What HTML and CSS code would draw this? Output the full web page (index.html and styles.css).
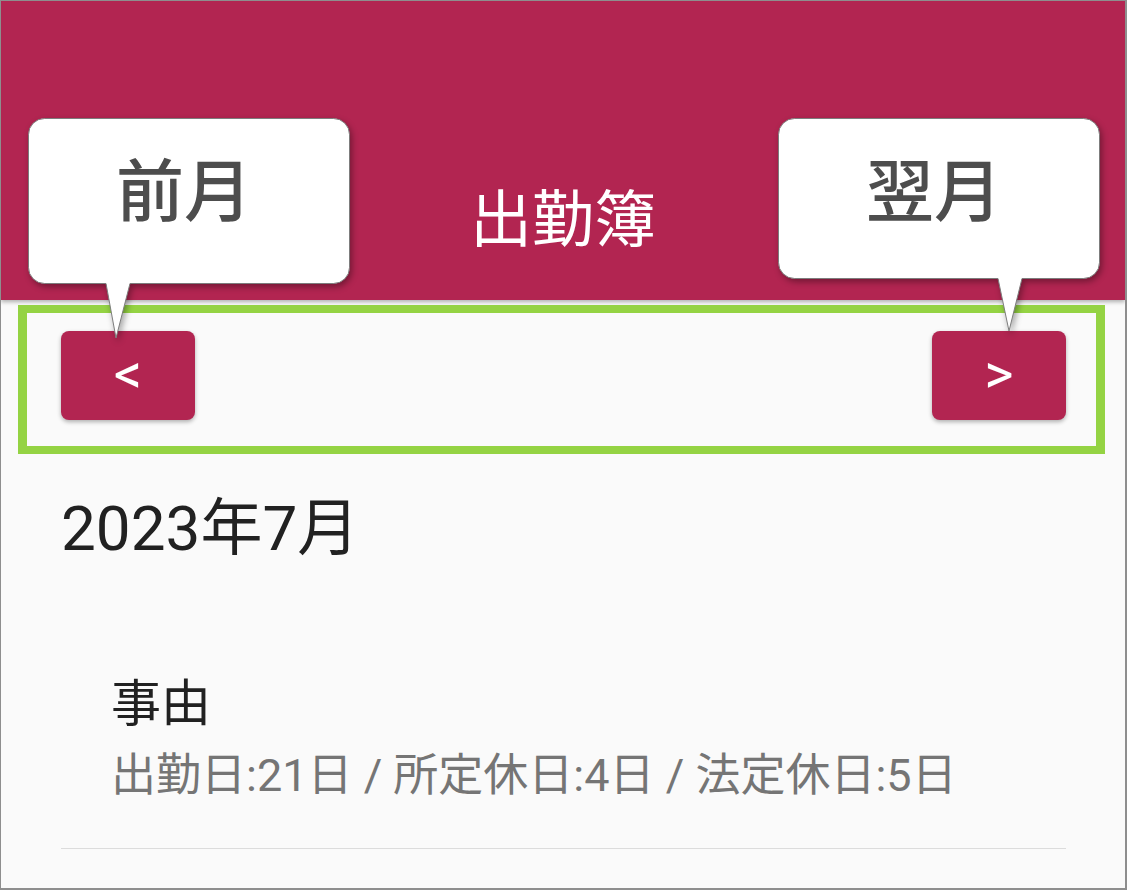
FILE: index.html
```html
<!DOCTYPE html>
<html lang="ja">
<head>
<meta charset="utf-8">
<title>出勤簿</title>
<link rel="stylesheet" href="styles.css">
</head>
<body>
<div class="screen">
  <header class="appbar">
    <h1 class="title">出勤簿</h1>
  </header>
  <div class="nav">
    <button class="nav-btn">&lt;</button>
    <button class="nav-btn">&gt;</button>
  </div>
  <h2 class="month">2023年7月</h2>
  <div class="item">
    <div class="item-title">事由</div>
    <div class="item-sub">出勤日:21日 / 所定休日:4日 / 法定休日:5日</div>
  </div>
  <div class="divider"></div>

  <div class="highlight"></div>

  <div class="callout callout-left">
    <svg class="callout-shape" width="322" height="222" viewBox="0 0 322 222">
      <path d="M16.5,0.5 H305.5 A16,16 0 0 1 321.5,16.5 V149.5 A16,16 0 0 1 305.5,165.5 H102 L88,220 L78,165.5 H16.5 A16,16 0 0 1 0.5,149.5 V16.5 A16,16 0 0 1 16.5,0.5 Z"/>
    </svg>
    <span class="callout-text">前月</span>
  </div>
  <div class="callout callout-right">
    <svg class="callout-shape" width="322" height="215" viewBox="0 0 322 215">
      <path d="M16.5,0.5 H305.5 A16,16 0 0 1 321.5,16.5 V144.5 A16,16 0 0 1 305.5,160.5 H244 L231,213 L220,160.5 H16.5 A16,16 0 0 1 0.5,144.5 V16.5 A16,16 0 0 1 16.5,0.5 Z"/>
    </svg>
    <span class="callout-text">翌月</span>
  </div>
</div>
</body>
</html>
```

FILE: styles.css
```css
* { box-sizing: border-box; }

html, body {
  margin: 0;
  padding: 0;
  background: #fafafa;
}

.screen {
  position: relative;
  width: 1127px;
  height: 890px;
  overflow: hidden;
  background: #fafafa;
  border-style: solid;
  border-color: #8e8e8e;
  border-width: 1px 2px 2px 1px;
  font-family: Roboto, "Noto Sans CJK JP", sans-serif;
}

.appbar {
  height: 299px;
  background: #b22551;
  display: flex;
  align-items: flex-end;
  justify-content: center;
  padding-bottom: 48px;
  box-shadow: 0 2px 4px rgba(0, 0, 0, 0.3);
  position: relative;
  z-index: 1;
}

.title {
  margin: 0;
  color: #ffffff;
  font-size: 62px;
  line-height: 62px;
  font-weight: 400;
}

.nav {
  display: flex;
  justify-content: space-between;
  padding: 0 59px 0 60px;
  margin-top: 31px;
}

.nav-btn {
  width: 134px;
  height: 89px;
  border: none;
  border-radius: 8px;
  background: #b22551;
  color: #ffffff;
  font-family: Roboto, sans-serif;
  font-size: 56px;
  font-weight: 400;
  line-height: 1;
  padding: 0 0 4px;
  box-shadow: 0 2px 4px rgba(0, 0, 0, 0.3);
}

.month {
  margin: 74px 0 0;
  padding-left: 60px;
  font-size: 62px;
  line-height: 70px;
  font-weight: 400;
  color: #212121;
}

.item {
  padding-left: 110px;
  margin-top: 109px;
}

.item-title {
  font-size: 50px;
  line-height: 62px;
  color: #212121;
}

.item-sub {
  margin-top: 15px;
  font-size: 45px;
  line-height: 52px;
  color: #757575;
}

.divider {
  margin: 46px 59px 0 60px;
  height: 1px;
  background: #dcdcdc;
}

.highlight {
  position: absolute;
  left: 17px;
  top: 304px;
  width: 1087px;
  height: 149px;
  border: solid #94d343;
  border-width: 8px 9px;
  z-index: 2;
}

.callout {
  position: absolute;
  top: 117px;
  width: 322px;
  z-index: 3;
}

.callout-left { left: 27px; height: 222px; }
.callout-right { left: 777px; height: 215px; }

.callout-shape {
  position: absolute;
  left: 0;
  top: 0;
  overflow: visible;
  filter: drop-shadow(2px 3px 3px rgba(0, 0, 0, 0.35));
}

.callout-shape path {
  fill: #ffffff;
  stroke: #7d7d7d;
  stroke-width: 1;
}

.callout-text {
  position: relative;
  display: block;
  padding-top: 35px;
  padding-right: 10px;
  text-align: center;
  font-family: "Noto Sans CJK JP", sans-serif;
  font-size: 68px;
  line-height: 68px;
  font-weight: 500;
  color: #4d4d4d;
}
```
